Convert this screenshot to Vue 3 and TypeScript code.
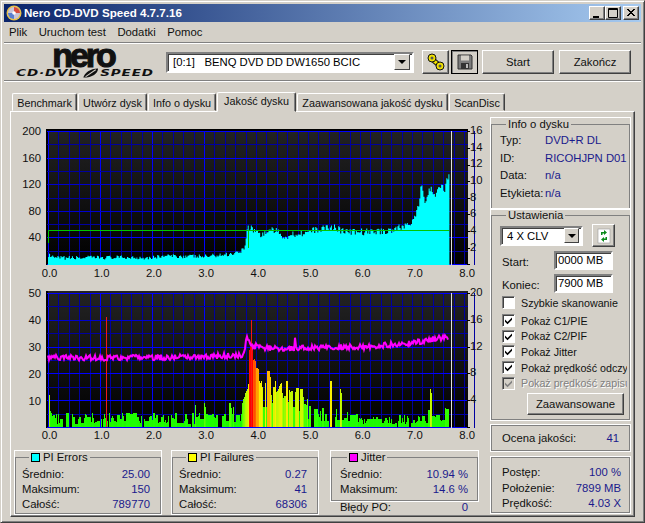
<script setup lang="ts">
// Nero CD-DVD Speed, zakładka "Jakość dysku". Wykresy liczone z ziarna, żeby były powtarzalne.
const X0 = 48
const UNIT = 52
const END = 7.72

function rng(seed: number) {
  let s = seed
  return () => {
    s = (s * 16807) % 2147483647
    return s / 2147483647
  }
}
const px = (pos: number) => X0 + pos * UNIT

interface Line { at: number; color: string }

const BRIGHT = '#0000ff'
const MID = '#0000d0'
const DIM = '#0000a0'

function vLines(): Line[] {
  const out: Line[] = []
  for (let i = 0; i <= 41; i++) {
    out.push({ at: Math.round(X0 + i * 10.4), color: i % 5 === 0 && i <= 15 ? BRIGHT : DIM })
  }
  return out
}
function hLines(top: number, bottom: number, mid: number[]): Line[] {
  const out: Line[] = []
  for (let i = 0; i <= 10; i++) {
    let color = i % 2 === 0 ? BRIGHT : DIM
    if (mid.includes(i)) color = MID
    out.push({ at: Math.round(top + ((bottom - top) * i) / 10), color })
  }
  return out
}

const W = 422
const vGrid = vLines()
const topH = hLines(131, 264, [4, 6])
const botH = hLines(293, 427, [2])

// kontur PI Errors: [pozycja, wysokość w px]
const piKnots: [number, number][] = [
  [0, 10], [0.1, 7], [1, 7.5], [2, 7.5], [2.2, 9], [3, 8.5], [3.5, 11], [3.7, 14], [3.79, 19],
  [3.81, 37], [3.9, 37], [4.1, 30], [4.3, 36], [4.55, 28], [4.7, 31], [5, 33], [5.3, 37],
  [5.5, 38], [5.7, 33], [6, 33], [6.5, 34], [6.8, 38], [7, 44], [7.12, 58], [7.17, 80],
  [7.25, 62], [7.35, 78], [7.45, 70], [7.55, 80], [7.62, 76], [7.68, 88], [7.72, 100]
]
function knot(list: [number, number][], pos: number) {
  for (let i = 1; i < list.length; i++) {
    if (pos <= list[i][0]) {
      const [a, av] = list[i - 1]
      const [b, bv] = list[i]
      return av + ((bv - av) * (pos - a)) / (b - a)
    }
  }
  return list[list.length - 1][1]
}

const r1 = rng(4242)
let piPath = `M${X0} 265`
for (let x = X0; x < px(END); x += 1.04) {
  const pos = (x - X0) / UNIT
  const h = knot(piKnots, pos) + (r1() - 0.5) * (pos < 3.8 ? 4 : 7)
  piPath += `V${(265 - Math.max(h, 2)).toFixed(1)}H${(x + 1.04).toFixed(1)}`
}
piPath += 'V265Z'

// PI Failures: słupki barwione wg wysokości
function barColor(h: number) {
  const stops = [
    [0, 32, 240, 0], [15, 32, 255, 0], [25, 90, 255, 0], [35, 190, 250, 0],
    [46, 250, 240, 0], [58, 255, 170, 0], [70, 255, 60, 0], [80, 255, 0, 0]
  ]
  for (let i = 1; i < stops.length; i++) {
    if (h <= stops[i][0]) {
      const a = stops[i - 1]
      const b = stops[i]
      const t = (h - a[0]) / (b[0] - a[0])
      return `rgb(${[1, 2, 3].map((k) => Math.round(a[k] + (b[k] - a[k]) * t)).join(',')})`
    }
  }
  return '#f00'
}
const failKnots: [number, number][] = [
  [0, 15], [3.3, 15], [3.45, 20], [3.7, 28], [3.8, 30], [3.95, 42], [4.8, 38], [4.95, 24], [5.8, 17],
  [6, 13], [7.2, 13], [7.3, 20], [7.7, 20]
]
// wybrane piki: x na stronie -> wysokość
const spikes: Record<number, number> = {
  49: 32, 50: 16, 195: 22, 204: 24, 205: 20, 229: 24, 230: 24, 231: 19, 242: 24, 243: 28, 244: 30,
  245: 34, 246: 36, 247: 38, 248: 43, 249: 77, 250: 80, 251: 82, 252: 80, 253: 67, 254: 68, 255: 66,
  256: 59, 257: 59, 258: 58, 259: 46, 260: 44, 261: 46, 262: 40, 267: 56, 268: 56, 269: 56, 270: 50,
  280: 43, 290: 35, 295: 35, 303: 30, 330: 46, 331: 46, 340: 38, 341: 34, 430: 38, 431: 34,
  449: 46, 450: 52
}
const r2 = rng(977)
const bars: { x: number; h: number; fill: string }[] = []
let hold = 0
for (let x = X0; x < px(END) - 1; x++) {
  const pos = (x - X0) / UNIT
  const base = knot(failKnots, pos)
  const dense = pos > 3.7 && pos < 5
  let h = hold
  if (r2() > 0.38) {
    h = !dense && r2() < 0.1 ? 0 : Math.max(0, base * ((dense ? 0.45 : 0.2) + r2() * 0.75))
    hold = h
  }
  if (spikes[x]) h = spikes[x]
  if (h > 0) bars.push({ x, h: Math.round(h), fill: barColor(h) })
}

// Jitter
const r3 = rng(31337)
const jitKnots: [number, number][] = [
  [0, 357], [1, 358], [2, 357.5], [3, 356.5], [3.78, 355], [3.82, 335], [3.88, 345], [4, 347],
  [4.5, 349], [5, 347.5], [5.8, 347], [6.3, 347], [6.5, 345], [7, 343], [7.4, 339], [7.72, 337]
]
let jitPts = ''
for (let x = X0; x < px(END) - 1; x += 1) {
  const pos = (x - X0) / UNIT
  let y = knot(jitKnots, pos) + (r3() - 0.5) * 5.5
  if (pos > 3.9 && pos < 5 && r3() < 0.14) y -= 14 * r3()
  jitPts += `${x},${y.toFixed(1)} `
}

const leftTop = ['200', '160', '120', '80', '40']
const rightTop = ['16', '14', '12', '10', '8', '6', '4', '2']
const leftBot = ['50', '40', '30', '20', '10']
const rightBot = ['20', '16', '12', '8', '4']
const xLabels = ['0.0', '1.0', '2.0', '3.0', '4.0', '5.0', '6.0', '7.0', '8.0']
// środki etykiet osi X względem wykresu
const xLeft = (i: number) => 14.5 + i * 52.2

const topTicksR = [131, 148, 165, 181, 198, 214, 231, 248, 264]
const botTicksR = [293, 320, 347, 373, 400, 427]

const tabs = ['Benchmark', 'Utwórz dysk', 'Info o dysku', 'Jakość dysku', 'Zaawansowana jakość dysku', 'ScanDisc']
const menu = ['Plik', 'Uruchom test', 'Dodatki', 'Pomoc']

const stats = [
  { cls: 'pie', title: 'PI Errors', swatch: '#00ffff', rows: [['Średnio:', '25.00'], ['Maksimum:', '150'], ['Całość:', '789770']] },
  { cls: 'pif', title: 'PI Failures', swatch: '#ffff00', rows: [['Średnio:', '0.27'], ['Maksimum:', '41'], ['Całość:', '68306']] }
]
const discInfo = [['Typ:', 'DVD+R DL'], ['ID:', 'RICOHJPN D01'], ['Data:', 'n/a'], ['Etykieta:', 'n/a']]
const checks = [
  { t: 'Pokaż C1/PIE', on: true },
  { t: 'Pokaż C2/PIF', on: true },
  { t: 'Pokaż Jitter', on: true },
  { t: 'Pokaż prędkość odczy', on: true },
  { t: 'Pokaż prędkość zapisu', on: true, off: true }
]
const progress = [['Postęp:', '100 %'], ['Położenie:', '7899 MB'], ['Prędkość:', '4.03 X']]
</script>

<template>
  <div class="window">
    <div class="titlebar">
      <svg class="appicon" width="16" height="16" viewBox="0 0 16 16">
        <circle cx="8" cy="8" r="7.5" fill="#e8c24a" />
        <circle cx="8" cy="8" r="6" fill="#c9c4d8" />
        <path d="M8 2a6 6 0 0 1 6 6H8z" fill="#d84a3a" />
        <path d="M2 8a6 6 0 0 0 6 6V8z" fill="#5a7fd0" />
        <circle cx="8" cy="8" r="1.8" fill="#fff" />
      </svg>
      <span class="title">Nero CD-DVD Speed 4.7.7.16</span>
      <div class="caption-btns">
        <button class="cap"><svg width="10" height="10"><rect x="1" y="8" width="6" height="2" /></svg></button>
        <button class="cap"><svg width="10" height="10"><path d="M0.5 0.5h9v9h-9zM0.5 1.5h9" fill="none" stroke="#000" /></svg></button>
        <button class="cap close"><svg width="10" height="10"><path d="M1 1l7 7M2 1l7 7M8 1l-7 7M9 1l-7 7" stroke="#000" /></svg></button>
      </div>
    </div>

    <div class="menubar">
      <span v-for="m in menu" :key="m">{{ m }}</span>
    </div>

    <div class="toolbar">
      <div class="logo">
        <div class="logo-nero">nero</div>
        <div class="logo-sub">
          <span>CD·DVD</span>
          <svg width="12" height="10" viewBox="0 0 15 12" preserveAspectRatio="none"><path d="M1 11.5C2 6 7 .5 14 .5c0 6-5 11-13 11z" fill="#111" /><path d="M3 10.5L12 2" stroke="#d4d0c8" stroke-width="1.2" /></svg>
          <span>SPEED</span>
        </div>
      </div>
      <div class="combo drive">
        <span class="combo-text">[0:1]&nbsp;&nbsp; BENQ DVD DD DW1650 BCIC</span>
        <span class="combo-arrow"></span>
      </div>
      <button class="btn icon">
        <svg width="22" height="20" viewBox="0 0 22 20">
          <path d="M7 7l8 7" stroke="#111" stroke-width="5" />
          <path d="M7 7l8 7" stroke="#f0e000" stroke-width="3" />
          <circle cx="7" cy="6" r="4" fill="#f0e000" stroke="#111" />
          <circle cx="15" cy="14" r="4" fill="#f0e000" stroke="#111" />
          <circle cx="7" cy="6" r="1.5" fill="#555" />
          <circle cx="15" cy="14" r="1.5" fill="#555" />
        </svg>
      </button>
      <button class="btn icon pressed">
        <svg width="18" height="18" viewBox="0 0 18 18">
          <path d="M2 2h13l1 1v13H2z" fill="#7c7c7c" stroke="#333" />
          <rect x="5" y="2.5" width="8" height="5" fill="#d4d0c8" />
          <rect x="5" y="10" width="8" height="6" fill="#333" />
          <rect x="10" y="11" width="2" height="4" fill="#bbb" />
        </svg>
      </button>
      <button class="btn big start">Start</button>
      <button class="btn big">Zakończ</button>
    </div>

    <div class="tabs">
      <div v-for="(t, i) in tabs" :key="t" class="tab" :class="[{ active: i === 3 }, 'tab' + i]">{{ t }}</div>
    </div>

    <div class="panel">
      <div class="main">
        <div class="chart top">
          <svg width="470" height="137" viewBox="15 129 470 137" class="chart-svg">
            <defs>
              <linearGradient id="plotbg" x1="0" y1="0" x2="0" y2="1">
                <stop offset="0" stop-color="#232323" />
                <stop offset="1" stop-color="#000" />
              </linearGradient>
            </defs>
            <rect x="46" y="129" :width="W" height="136" fill="url(#plotbg)" />
            <rect x="46" y="129" :width="W" height="2" fill="#000" />
            <rect x="46" y="129" width="2" height="136" fill="#000" />
            <line v-for="g in vGrid" :key="g.at" :x1="g.at + 0.5" :x2="g.at + 0.5" y1="131" y2="265" :stroke="g.color" />
            <line v-for="g in topH" :key="g.at" x1="47" :x2="46 + W" :y1="g.at + 0.5" :y2="g.at + 0.5" :stroke="g.color" />
            <path :d="piPath" fill="#00ffff" />
            <polyline points="48.5,243 48.5,230.5 248.5,230.5 248.5,248 248.5,230.5 449,230.5" fill="none" stroke="#00c800" />
            <line x1="451.5" x2="451.5" y1="131" y2="265" stroke="#e0e0e0" />
            <line v-for="t in topTicksR" :key="t" x1="467" x2="470" :y1="t + 0.5" :y2="t + 0.5" stroke="#000" />
          </svg>
          <div class="ylabels left t1">
            <span v-for="l in leftTop" :key="l">{{ l }}</span>
          </div>
          <div class="ylabels right t2">
            <span v-for="l in rightTop" :key="l">{{ l }}</span>
          </div>
          <div class="xlabels">
            <span v-for="(l, i) in xLabels" :key="l" :style="{ left: xLeft(i) + 'px' }">{{ l }}</span>
          </div>
        </div>

        <div class="chart bottom">
          <svg width="470" height="138" viewBox="15 291 470 138" class="chart-svg">
            <rect x="46" y="291" :width="W" height="137" fill="url(#plotbg)" />
            <rect x="46" y="291" width="2" height="137" fill="#000" />
            <line v-for="g in vGrid" :key="g.at" :x1="g.at + 0.5" :x2="g.at + 0.5" y1="293" y2="428" :stroke="g.color" />
            <line v-for="g in botH" :key="g.at" x1="47" :x2="46 + W" :y1="g.at + 0.5" :y2="g.at + 0.5" :stroke="g.color" />
            <rect v-for="b in bars" :key="b.x" :x="b.x" :y="427 - b.h" width="1" :height="b.h" :fill="b.fill" />
            <line x1="106.5" x2="106.5" y1="317" y2="427" stroke="#f01818" />
            <line x1="251.5" x2="251.5" y1="320" y2="427" stroke="#f01818" />
            <polyline :points="jitPts" fill="none" stroke="#ff00ff" stroke-width="2" />
            <line x1="451.5" x2="451.5" y1="293" y2="428" stroke="#e0e0e0" />
            <line v-for="t in botTicksR" :key="t" x1="467" x2="470" :y1="t + 0.5" :y2="t + 0.5" stroke="#000" />
          </svg>
          <div class="ylabels left b1">
            <span v-for="l in leftBot" :key="l">{{ l }}</span>
          </div>
          <div class="ylabels right b2">
            <span v-for="l in rightBot" :key="l">{{ l }}</span>
          </div>
          <div class="xlabels">
            <span v-for="(l, i) in xLabels" :key="l" :style="{ left: xLeft(i) + 'px' }">{{ l }}</span>
          </div>
        </div>

        <div class="stats">
          <fieldset v-for="s in stats" :key="s.cls" class="group stat" :class="s.cls">
            <legend><i class="swatch" :style="{ background: s.swatch }"></i>{{ s.title }}</legend>
            <div v-for="r in s.rows" :key="r[0]" class="kv">
              <span>{{ r[0] }}</span><b>{{ r[1] }}</b>
            </div>
          </fieldset>
          <div class="jitter-col">
            <fieldset class="group stat jit">
              <legend><i class="swatch" style="background: #ff00ff"></i>Jitter</legend>
              <div class="kv"><span>Średnio:</span><b>10.94 %</b></div>
              <div class="kv"><span>Maksimum:</span><b>14.6 %</b></div>
            </fieldset>
            <div class="kv po"><span>Błędy PO:</span><b>0</b></div>
          </div>
        </div>
      </div>

      <div class="side">
        <fieldset class="group info">
          <legend>Info o dysku</legend>
          <div v-for="r in discInfo" :key="r[0]" class="info-row">
            <span>{{ r[0] }}</span><b>{{ r[1] }}</b>
          </div>
        </fieldset>

        <fieldset class="group settings">
          <legend>Ustawienia</legend>
          <div class="speed-row">
            <div class="combo speed">
              <span class="combo-text">4 X CLV</span>
              <span class="combo-arrow"></span>
            </div>
            <button class="btn refresh">
              <svg width="14" height="16" viewBox="0 0 14 16">
                <rect x="1" y="1" width="12" height="14" fill="#fff" stroke="#9a9a9a" stroke-width="0.6" />
                <path d="M4 7V4h3V2l3 2.5L7 7V5.5H5.5V7zM10 9v3H7v2l-3-2.5L7 9v1.5h1.5V9z" fill="#0a8a1a" />
              </svg>
            </button>
          </div>
          <div class="mb-row"><span>Start:</span><div class="edit">0000 MB</div></div>
          <div class="mb-row"><span>Koniec:</span><div class="edit">7900 MB</div></div>
          <div class="check quick"><i class="box"></i><span>Szybkie skanowanie</span></div>
          <div class="checks">
            <div v-for="c in checks" :key="c.t" class="check" :class="{ disabled: c.off }">
              <i class="box">
                <svg width="9" height="9" viewBox="0 0 9 9"><path d="M1 3.5l2.5 2.5L8 1.5v2.2L3.5 8.2 1 5.7z" :fill="c.off ? '#808080' : '#000'" /></svg>
              </i>
              <span>{{ c.t }}</span>
            </div>
          </div>
          <div class="adv-row"><button class="btn adv">Zaawansowane</button></div>
        </fieldset>

        <div class="box-plain score">
          <div class="kv"><span>Ocena jakości:</span><b>41</b></div>
        </div>
        <div class="box-plain prog">
          <div v-for="r in progress" :key="r[0]" class="kv"><span>{{ r[0] }}</span><b>{{ r[1] }}</b></div>
        </div>
      </div>
    </div>
  </div>
</template>

<style>
html, body { margin: 0; padding: 0; background: #d4d0c8; }
</style>

<style scoped>
* { box-sizing: border-box; }
.window {
  width: 645px; height: 523px; background: #d4d0c8; padding: 3px 3px 0; overflow: hidden;
  font: 11.3px/14px "Liberation Sans", Arial, sans-serif; color: #101010;
  border: 1px solid #404040; border-top-color: #d4d0c8; border-left-color: #d4d0c8;
  box-shadow: inset 1px 1px 0 #fff, inset -1px -1px 0 #808080;
  display: flex; flex-direction: column; position: relative;
}

.titlebar {
  height: 18px; flex: none; display: flex; align-items: center; padding-left: 2px;
  background: linear-gradient(90deg, #0a246a, #a6caf0);
}
.appicon { flex: none; margin-right: 2px; }
.title { color: #fff; font-weight: 700; font-size: 11.6px; }
.caption-btns { margin-left: auto; display: flex; margin-right: 2px; }
.cap {
  width: 16px; height: 14px; padding: 0; background: #d4d0c8; border: 1px solid; display: flex; align-items: center; justify-content: center;
  border-color: #fff #404040 #404040 #fff; box-shadow: inset -1px -1px 0 #808080;
}
.cap.close { margin-left: 2px; }

.menubar { height: 21px; flex: none; display: flex; gap: 11.5px; padding-left: 5px; align-items: center; border-bottom: 1px solid #808080; box-shadow: 0 1px 0 #fff; }

.toolbar {
  height: 38px; flex: none; display: flex; align-items: center; padding: 1px 0 0 8px;
  border-bottom: 1px solid #808080; box-shadow: 0 1px 0 #fff;
}
.logo { width: 146px; flex: none; text-align: center; color: #111; height: 36px; }
.logo-nero { font: 900 34px/22px "Liberation Sans", Arial, sans-serif; letter-spacing: -3px; -webkit-text-stroke: 1.1px #111; margin-left: -4px; height: 24px; }
.logo-sub { display: flex; justify-content: center; align-items: center; font: italic 700 9.5px/10px "DejaVu Sans", sans-serif; letter-spacing: 0.6px; gap: 1px; white-space: nowrap; transform: scaleX(1.42); }

.combo {
  background: #fff; display: flex; align-items: center; border: 2px solid; border-color: #808080 #fff #fff #808080;
  box-shadow: inset 1px 1px 0 #404040; padding: 0 2px 0 5px; color: #000;
}
.combo-text { flex: 1; white-space: nowrap; overflow: hidden; }
.combo-arrow {
  width: 16px; height: 16px; background: #d4d0c8; border: 1px solid; border-color: #fff #404040 #404040 #fff; position: relative; flex: none;
}
.combo-arrow::after {
  content: ""; position: absolute; left: 3px; top: 5px; border: 4px solid transparent; border-top: 4px solid #000; border-bottom: 0;
}
.drive { width: 248px; height: 21px; margin-left: 8px; }

.btn {
  background: #d4d0c8; border: 1px solid; border-color: #fff #404040 #404040 #fff; box-shadow: inset -1px -1px 0 #808080;
  font: inherit; color: #101010; padding: 0; display: flex; align-items: center; justify-content: center;
}
.btn.icon { width: 27px; height: 24px; }
.toolbar .btn.icon:first-of-type { margin-left: 8px; }
.btn.icon.pressed { margin-left: 2px; border: 1px solid #000; box-shadow: inset 1px 1px 0 #808080; }
.btn.big { width: 72px; height: 24px; margin-left: 5px; }
.btn.big.start { margin-left: 4px; }

.tabs { height: 19px; margin: 11px 0 0 8px; display: flex; align-items: flex-end; flex: none; position: relative; z-index: 1; font-size: 10.8px; }
.tab {
  height: 18px; padding-top: 2px; text-align: center; border: 1px solid; border-color: #fff #404040 #d4d0c8 #fff; border-radius: 2px 2px 0 0;
  white-space: nowrap; background: #d4d0c8; margin-right: 1px; box-shadow: inset -1px 0 0 #808080;
}
.tab0 { width: 65px; }
.tab1 { width: 69px; }
.tab2 { width: 68px; }
.tab3 { width: 79px; }
.tab4 { width: 151px; }
.tab5 { width: 56px; }
.tab.active { height: 20px; padding-top: 1px; margin-bottom: -1px; border-bottom-color: #d4d0c8; }

.panel {
  width: 625px; height: 406px; margin-left: 6px; flex: none; display: flex; padding: 6px 4px 0 4px;
  border: 1px solid; border-color: #fff #404040 #404040 #fff; box-shadow: inset -1px -1px 0 #808080;
}
.main { width: 476px; flex: none; padding-top: 11px; }
.side { flex: 1; min-width: 0; display: flex; flex-direction: column; }

.chart { position: relative; width: 470px; }
.chart.top { height: 162px; }
.chart.bottom { height: 160px; }
.chart-svg { display: block; }
.ylabels { position: absolute; display: flex; flex-direction: column; line-height: 14px; }
.ylabels.left { left: 0; width: 26px; text-align: right; }
.ylabels.right { left: 455px; text-align: left; }
.t1 { top: -5px; gap: 12.5px; }
.t2 { top: -6px; gap: 2.7px; }
.b1 { top: -5.5px; gap: 13px; }
.b2 { top: -6px; gap: 12.8px; }
.xlabels { position: absolute; left: 0; top: 137px; }
.xlabels span { position: absolute; width: 40px; text-align: center; }

.group { margin: 0; padding: 0; min-width: 0; border: 1px solid #808080; outline: 1px solid #fff; border-radius: 0; }
.group legend { padding: 0 2px; margin-left: 6px; line-height: 13px; color: #101010; white-space: nowrap; }
.swatch { display: inline-block; width: 9px; height: 9px; border: 1px solid #000; margin: 0 3px 0 0; vertical-align: -1px; }

.kv { display: flex; justify-content: space-between; height: 15px; line-height: 15px; white-space: nowrap; }
.kv b, .info-row b { font-weight: 400; color: #1a1a8c; }

.stats { display: flex; }
.stat { padding: 3px 10px 0 6px; }
.stat legend { margin-left: 7px; }
.pie, .pif { width: 146px; height: 63px; }
.pif { margin-left: 11px; }
.jitter-col { margin-left: 13px; width: 147px; }
.jit { width: 147px; height: 50px; padding: 3px 9px 0 8px; }
.po { padding: 0 10px 0 9px; margin-top: -1.5px; }

.info { height: 91px; padding: 1px 4px 0 8px; }
.info-row { display: flex; height: 17.5px; line-height: 17.5px; white-space: nowrap; }
.info-row span { width: 45px; flex: none; }

.settings { height: 211px; padding: 2px 5px 0 8px; }
.speed-row { display: flex; align-items: center; }
.speed { width: 83px; height: 20px; }
.speed .combo-arrow { width: 15px; height: 15px; }
.btn.refresh { width: 23px; height: 23px; margin-left: 9px; }
.mb-row { display: flex; align-items: center; justify-content: space-between; height: 19px; margin-top: 4px; padding: 0 11px 0 2px; }
.mb-row span { padding-top: 2px; }
.edit { width: 59px; height: 19px; background: #fff; border: 2px solid; border-color: #808080 #fff #fff #808080; box-shadow: inset 1px 1px 0 #404040; line-height: 15px; padding-left: 2px; color: #000; }
.check { display: flex; align-items: center; gap: 6px; height: 15.6px; padding-left: 2px; white-space: nowrap; overflow: hidden; width: 127px; font-size: 10.7px; }
.quick { margin-top: 2px; height: 15px; }
.checks { margin-top: 3px; }
.box { width: 13px; height: 13px; flex: none; background: #fff; border: 1px solid; border-color: #808080 #fff #fff #808080; box-shadow: inset 1px 1px 0 #404040; display: flex; align-items: center; justify-content: center; }
.disabled { color: #808080; text-shadow: 1px 1px 0 #fff; }
.disabled .box { background: #d4d0c8; }
.adv-row { margin-top: 2px; display: flex; padding-left: 27px; }
.btn.adv { width: 97px; height: 22px; }

.box-plain { border: 1px solid #808080; outline: 1px solid #fff; }
.score { height: 26px; margin-top: 5px; padding: 5px 10px 0 10px; }
.prog { height: 56px; margin-top: 6px; padding: 7px 8px 0 10px; }
.prog .kv { height: 15.5px; }
</style>
